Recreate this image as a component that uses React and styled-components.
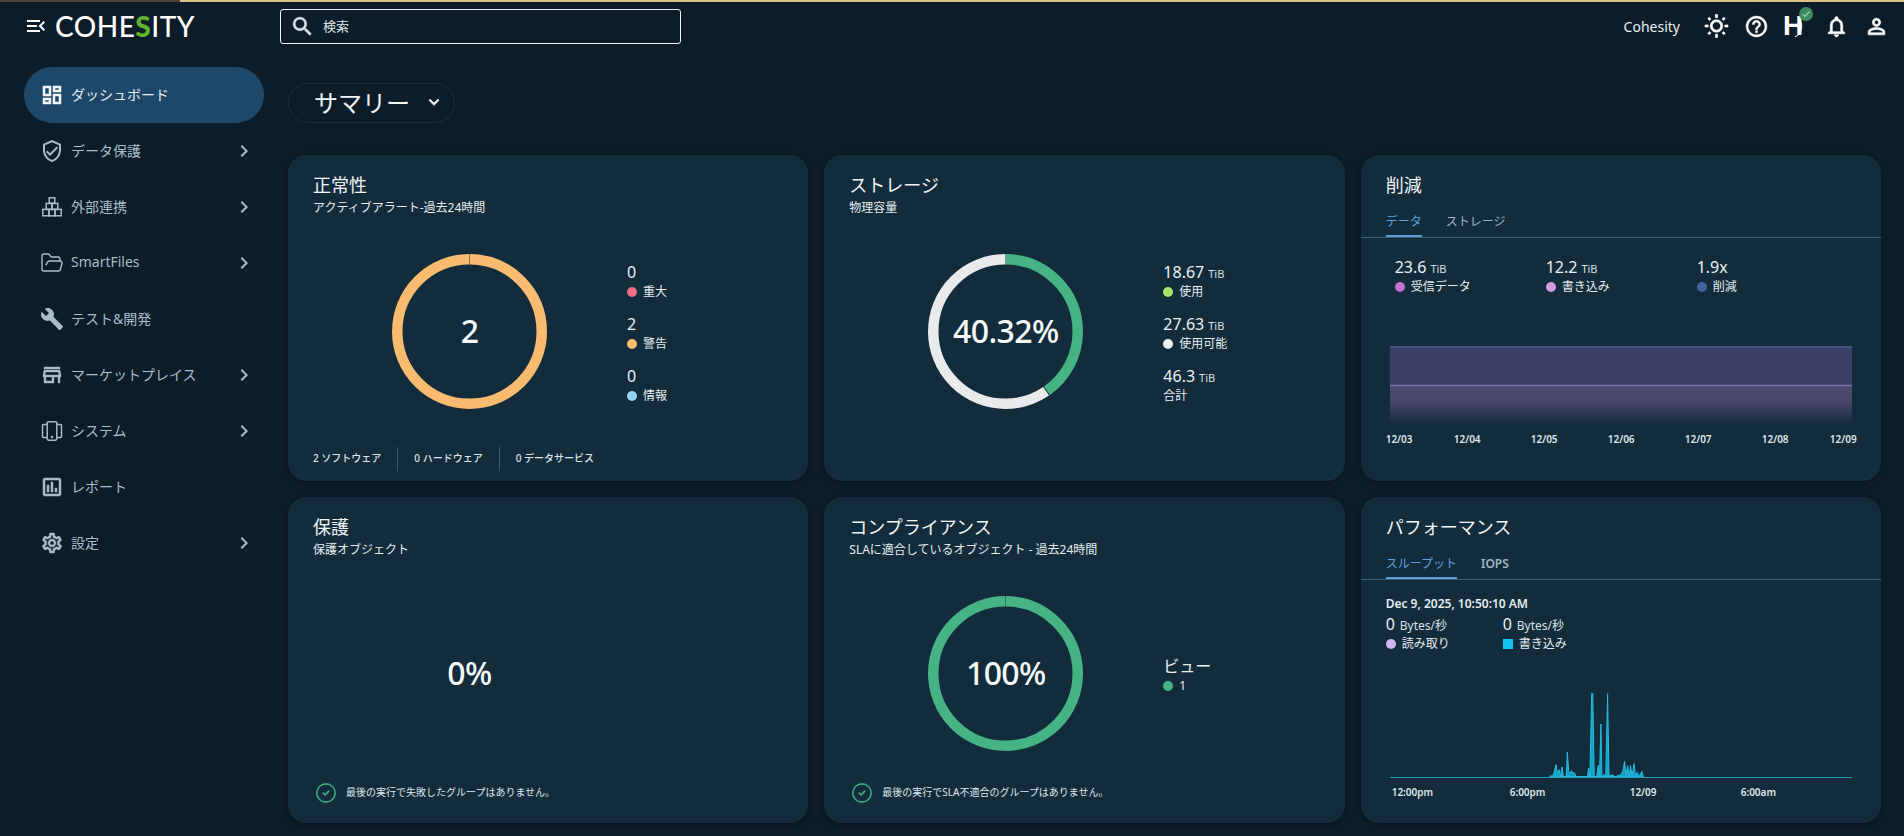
import React from 'react'
import styled, { createGlobalStyle } from 'styled-components'
import {
  MdMenuOpen, MdSearch, MdOutlineWbSunny, MdHelpOutline, MdOutlineNotifications, MdPersonOutline,
  MdOutlineDashboard, MdOutlineVerifiedUser, MdBuild, MdOutlineStore,
  MdOutlineAssessment, MdOutlineSettings, MdChevronRight, MdKeyboardArrowDown, MdCheck
} from 'react-icons/md'
import { LuCircleCheck, LuFolderOpen } from 'react-icons/lu'

const CARD = '#122c3c'
const PAGE = '#0c1c28'

const Global = createGlobalStyle`
  html, body { margin: 0; padding: 0; background: ${PAGE}; }
  body {
    font-family: "Noto Sans", "Noto Sans CJK JP", sans-serif;
    color: #eef3f6;
  }
  * { box-sizing: border-box; }
  /* material icons carry an invisible 24x24 box path, keep it unstroked */
  svg path[fill="none"] { stroke: none; }
`

const Page = styled.div`
  width: 1904px;
  height: 836px;
  overflow: hidden;
  background: ${PAGE};
`

const LoadBar = styled.div`
  height: 2px;
  background: linear-gradient(to right, #4f4636 180px, #dcc088 180px);
`

const Header = styled.header`
  height: 48px;
  display: flex;
  align-items: center;
`

const Brand = styled.div`
  width: 280px;
  padding-left: 24px;
  display: flex;
  align-items: center;
  color: #fff;
`

const LogoText = styled.div`
  margin-left: 7px;
  font-family: "Lato", sans-serif;
  font-size: 28px;
  line-height: 30px;
  font-weight: 500;
  letter-spacing: 0.5px;
  color: #fff;
  span { color: #63b32e; font-weight: 900; }
`

const SearchBox = styled.div`
  width: 401px;
  height: 35px;
  border: 1px solid #f2f5f7;
  border-radius: 3px;
  display: flex;
  align-items: center;
  padding: 0 0 0 9px;
  gap: 8px;
  font-size: 13px;
  color: #dfe7ec;
`

const SearchText = styled.span`
  padding-bottom: 2px;
`

const HeaderRight = styled.div`
  margin-left: auto;
  padding-right: 8px;
  display: flex;
  align-items: center;
`

const TenantName = styled.div`
  font-size: 14px;
  margin-right: 16px;
  color: #e8eef2;
`

const IconSlot = styled.div`
  position: relative;
  width: 40px;
  height: 32px;
  display: flex;
  align-items: center;
  justify-content: center;
  color: #fff;
`

const HeliosMark = styled.span`
  font-family: "Liberation Sans", sans-serif;
  font-weight: 700;
  font-size: 28px;
  line-height: 32px;
  margin-left: -6px;
  color: #fff;
`

const HeliosArc = styled.svg`
  position: absolute;
  left: 15px;
  top: 6px;
`

const Badge = styled.span`
  position: absolute;
  left: 23px;
  top: -3px;
  width: 14px;
  height: 14px;
  border-radius: 50%;
  background: #3f8a5f;
  display: flex;
  align-items: center;
  justify-content: center;
  color: #c5e6d0;
`

const Body = styled.div`
  display: flex;
`

const Sidebar = styled.nav`
  width: 288px;
  flex: none;
  padding: 17px 0 0 24px;
`

const NavItem = styled.div`
  width: 240px;
  height: 56px;
  border-radius: 28px;
  padding: 0 8px 0 16px;
  display: flex;
  align-items: center;
  gap: 7px;
  font-size: 14px;
  background: ${p => (p.$active ? '#1e4869' : 'transparent')};
  color: ${p => (p.$active ? '#e4edf3' : '#a8bdca')};
  svg { color: ${p => (p.$active ? '#f4f8fa' : '#a8bdca')}; flex: none; }
`

const NavLabel = styled.span`
  flex: 1;
  padding-bottom: 3px;
`

const Main = styled.main`
  flex: 1;
  padding: 33px 23px 0 0;
`

const ViewPicker = styled.div`
  width: 167px;
  height: 40px;
  border: 1px solid #1d2f3c;
  border-radius: 20px;
  display: flex;
  align-items: center;
  padding: 0 0 3px 25px;
  gap: 14px;
  font-size: 24px;
  color: #f0f4f7;
  margin-bottom: 32px;
`

const Grid = styled.div`
  display: grid;
  grid-template-columns: repeat(3, 1fr);
  grid-auto-rows: 326px;
  gap: 16px;
`

const Card = styled.section`
  background: ${CARD};
  border-radius: 18px;
  box-shadow: 0 1px 4px rgba(0, 0, 0, 0.35);
  display: flex;
  flex-direction: column;
  overflow: hidden;
  padding-top: 18px;
`

const Title = styled.h2`
  margin: 0;
  padding: 0 25px;
  font-size: 18px;
  line-height: 24px;
  font-weight: 400;
  color: #f2f6f8;
`

const Subtitle = styled.div`
  padding: 1px 25px 0;
  font-size: 12px;
  line-height: 20px;
  color: #e6edf1;
`

const ChartBody = styled.div`
  margin-top: 36px;
  height: 155px;
  display: flex;
`

const DonutBox = styled.div`
  position: relative;
  width: 313px;
  margin-left: 25px;
  margin-right: 1px;
  display: flex;
  justify-content: center;
`

const DonutValue = styled.div`
  position: absolute;
  inset: 0;
  display: flex;
  align-items: center;
  justify-content: center;
  padding-bottom: 3px;
  font-size: 32px;
  font-weight: 500;
  letter-spacing: -0.6px;
  color: #f7fafb;
`

const Legend = styled.div`
  padding-top: 3px;
  display: flex;
  flex-direction: column;
  justify-content: center;
  gap: 12px;
`

const Value = styled.div`
  font-size: 16px;
  line-height: 22px;
  color: #eaf0f4;
  small { font-size: 11px; line-height: 1; margin-left: 4px; color: #d7e0e6; }
`

const Label = styled.div`
  display: flex;
  align-items: center;
  gap: 6px;
  font-size: 12px;
  line-height: 18px;
  color: #e6edf1;
`

const Dot = styled.i`
  width: 10px;
  height: 10px;
  flex: none;
  border-radius: ${p => (p.$square ? '0' : '50%')};
  background: ${p => p.color};
`

const FootStats = styled.div`
  margin-top: auto;
  margin-bottom: 10px;
  padding-left: 25px;
  display: flex;
  height: 24px;
  align-items: center;
`

const FootStat = styled.div`
  font-size: 10px;
  font-weight: 500;
  color: #dce5ea;
  padding: 0 16px 3px;
  height: 100%;
  display: flex;
  align-items: center;
  &:first-child { padding-left: 0; }
  & + & { border-left: 1px solid #3d5666; }
`

const StatusLine = styled.div`
  margin-top: auto;
  margin-bottom: 19px;
  padding-left: 27px;
  display: flex;
  align-items: center;
  gap: 9px;
  font-size: 10px;
  line-height: 20px;
  color: #dfe7ec;
  svg { color: #3fa67f; }
`

const StatusText = styled.span`
  padding-bottom: 2px;
`

const TabBar = styled.div`
  margin-top: 9px;
  padding-left: 25px;
  height: 32px;
  border-bottom: 1px solid #3f6177;
  display: flex;
  gap: 24px;
`

const Tab = styled.div`
  height: 31px;
  padding-top: 3px;
  line-height: 26px;
  font-size: 12px;
  font-weight: ${p => (p.$latin ? 600 : 400)};
  border-bottom: 2px solid ${p => (p.$active ? '#5b9fd6' : 'transparent')};
  color: ${p => (p.$active ? '#5ea3da' : '#9fb6c5')};
`

const Stats = styled.div`
  margin-top: 18px;
  padding-left: 34px;
  display: flex;
`

const StatCol = styled.div`
  width: 151px;
`

const AreaChart = styled.svg`
  display: block;
  margin: 50px 0 0 29px;
`

const DayAxis = styled.div`
  margin: 7px 0 0 25px;
  width: 471px;
  display: grid;
  grid-template-columns: 43px repeat(5, 77px) 43px;
  font-size: 10px;
  line-height: 16px;
  font-weight: 600;
  color: #dfe7ec;
  span { text-align: center; }
  span:first-child { text-align: left; }
  span:last-child { text-align: right; }
`

const Timestamp = styled.div`
  margin-top: 15px;
  padding-left: 25px;
  font-size: 12px;
  line-height: 18px;
  font-weight: 600;
  color: #e6edf1;
`

const PerfStats = styled.div`
  margin-top: 1px;
  padding-left: 25px;
  display: flex;
`

const PerfCol = styled.div`
  width: 117px;
`

const PerfValue = styled(Value)`
  line-height: 21px;
  small { font-size: 12px; margin-left: 5px; }
`

const SpikeChart = styled.svg`
  display: block;
  margin: 37px 0 0 29px;
`

const TimeAxis = styled.div`
  margin: 2px 0 0 31px;
  display: grid;
  grid-template-columns: 118px 120px 111px auto;
  font-size: 10px;
  line-height: 16px;
  font-weight: 600;
  color: #dfe7ec;
`

// 外部連携 stacked boxes, not in the icon set
const StackIcon = () => (
  <svg width='24' height='24' viewBox='0 0 24 24' fill='none' stroke='currentColor' strokeWidth='1.5'>
    <rect x='9.2' y='2.8' width='5.6' height='5.6' />
    <rect x='6.2' y='8.4' width='5.8' height='6' />
    <rect x='12' y='8.4' width='5.8' height='6' />
    <rect x='2.8' y='14.4' width='6.2' height='6.4' />
    <rect x='9' y='14.4' width='6' height='6.4' />
    <rect x='15' y='14.4' width='6.2' height='6.4' />
  </svg>
)

const DevicesIcon = () => (
  <svg width='24' height='24' viewBox='0 0 24 24' fill='none' stroke='currentColor' strokeWidth='1.5'>
    <rect x='7.2' y='2.8' width='9.6' height='18.4' rx='1.4' />
    <path d='M7.2 5.5H3.4a.9.9 0 0 0-.9.9v11.2a.9.9 0 0 0 .9.9h3.8M16.8 5.5h3.8a.9.9 0 0 1 .9.9v11.2a.9.9 0 0 1-.9.9h-3.8' />
    <circle cx='12' cy='18' r='.5' fill='currentColor' />
  </svg>
)

const Donut = ({ segments }) => {
  const r = 72.25
  const c = 2 * Math.PI * r
  let start = 0
  return (
    <svg width='155' height='155' viewBox='0 0 155 155'>
      <g transform='rotate(-90 77.5 77.5)' fill='none' strokeWidth='10.5'>
        {segments.map(s => {
          const len = c * s.share
          const el = (
            <circle
              key={s.color}
              cx='77.5'
              cy='77.5'
              r={r}
              stroke={s.color}
              strokeDasharray={`${len - 1} ${c - len + 1}`}
              strokeDashoffset={-start - 0.5}
            />
          )
          start += len
          return el
        })}
      </g>
    </svg>
  )
}

const nav = [
  { label: 'ダッシュボード', icon: <MdOutlineDashboard size={24} strokeWidth={0.5} />, active: true },
  { label: 'データ保護', icon: <MdOutlineVerifiedUser size={24} />, more: true },
  { label: '外部連携', icon: <StackIcon />, more: true },
  { label: 'SmartFiles', icon: <LuFolderOpen size={24} strokeWidth={1.4} />, more: true },
  { label: 'テスト&開発', icon: <MdBuild size={24} /> },
  { label: 'マーケットプレイス', icon: <MdOutlineStore size={24} strokeWidth={0.4} />, more: true },
  { label: 'システム', icon: <DevicesIcon />, more: true },
  { label: 'レポート', icon: <MdOutlineAssessment size={24} strokeWidth={0.5} /> },
  { label: '設定', icon: <MdOutlineSettings size={24} strokeWidth={0.5} />, more: true }
]

// zoomed reference coordinates of the throughput spikes: x along the card, y above the base line
const spikes = [
  [565, 860], [575, 858], [583, 825], [587, 850], [592, 840], [596, 860], [600, 832], [604, 860], [612, 862],
  [615, 787], [619, 845], [623, 850], [627, 843], [631, 852], [635, 848], [640, 862], [672, 862], [675, 835],
  [679, 860], [684, 610], [687, 612], [691, 862], [698, 862], [703, 827], [706, 860], [710, 703], [713, 860],
  [720, 855], [724, 860], [729, 612], [733, 860], [743, 855], [750, 862], [757, 858], [767, 855], [772, 845],
  [777, 815], [781, 855], [786, 828], [790, 860], [794, 828], [798, 860], [804, 822], [808, 860], [813, 848],
  [818, 862], [826, 845], [830, 862]
]
const spikePoints = spikes
  .map(([x, y]) => `${(x / 2.83 - 40).toFixed(1)},${(87 + (y - 862) / 3).toFixed(1)}`)
  .join(' ')

const App = () => (
  <Page>
    <Global />
    <LoadBar />
    <Header>
      <Brand>
        <MdMenuOpen size={24} />
        <LogoText>COHE<span>S</span>ITY</LogoText>
      </Brand>
      <SearchBox>
        <MdSearch size={25} strokeWidth={0.5} />
        <SearchText>検索</SearchText>
      </SearchBox>
      <HeaderRight>
        <TenantName>Cohesity</TenantName>
        <IconSlot><MdOutlineWbSunny size={25} strokeWidth={0.6} /></IconSlot>
        <IconSlot><MdHelpOutline size={25} strokeWidth={0.4} /></IconSlot>
        <IconSlot>
          <HeliosMark>H</HeliosMark>
          <HeliosArc width='14' height='24' viewBox='0 0 14 24' fill='none' stroke='#fff' strokeWidth='1'>
            <path d='M9 4c3 5 2 11-2 15l-3 2' />
          </HeliosArc>
          <Badge><MdCheck size={10} /></Badge>
        </IconSlot>
        <IconSlot><MdOutlineNotifications size={25} strokeWidth={0.6} /></IconSlot>
        <IconSlot><MdPersonOutline size={25} strokeWidth={0.6} /></IconSlot>
      </HeaderRight>
    </Header>
    <Body>
      <Sidebar>
        {nav.map(item => (
          <NavItem key={item.label} $active={item.active}>
            {item.icon}
            <NavLabel>{item.label}</NavLabel>
            {item.more && <MdChevronRight size={24} />}
          </NavItem>
        ))}
      </Sidebar>
      <Main>
        <ViewPicker>
          サマリー
          <MdKeyboardArrowDown size={20} strokeWidth={1} />
        </ViewPicker>
        <Grid>
          <Card>
            <Title>正常性</Title>
            <Subtitle>アクティブアラート-過去24時間</Subtitle>
            <ChartBody>
              <DonutBox>
                <Donut segments={[{ share: 1, color: '#f9bb6f' }]} />
                <DonutValue>2</DonutValue>
              </DonutBox>
              <Legend>
                <div><Value>0</Value><Label><Dot color='#ef6f82' />重大</Label></div>
                <div><Value>2</Value><Label><Dot color='#f9bb6f' />警告</Label></div>
                <div><Value>0</Value><Label><Dot color='#93d4f7' />情報</Label></div>
              </Legend>
            </ChartBody>
            <FootStats>
              <FootStat>2 ソフトウェア</FootStat>
              <FootStat>0 ハードウェア</FootStat>
              <FootStat>0 データサービス</FootStat>
            </FootStats>
          </Card>

          <Card>
            <Title>ストレージ</Title>
            <Subtitle>物理容量</Subtitle>
            <ChartBody>
              <DonutBox>
                <Donut segments={[{ share: 0.4032, color: '#45b384' }, { share: 0.5968, color: '#e9eaeb' }]} />
                <DonutValue>40.32%</DonutValue>
              </DonutBox>
              <Legend>
                <div><Value>18.67<small>TiB</small></Value><Label><Dot color='#a6e070' />使用</Label></div>
                <div><Value>27.63<small>TiB</small></Value><Label><Dot color='#ecedee' />使用可能</Label></div>
                <div><Value>46.3<small>TiB</small></Value><Label>合計</Label></div>
              </Legend>
            </ChartBody>
          </Card>

          <Card>
            <Title>削減</Title>
            <TabBar>
              <Tab $active>データ</Tab>
              <Tab>ストレージ</Tab>
            </TabBar>
            <Stats>
              <StatCol><Value>23.6<small>TiB</small></Value><Label><Dot color='#c46fd0' />受信データ</Label></StatCol>
              <StatCol><Value>12.2<small>TiB</small></Value><Label><Dot color='#d29ae0' />書き込み</Label></StatCol>
              <StatCol><Value>1.9x</Value><Label><Dot color='#44659c' />削減</Label></StatCol>
            </Stats>
            <AreaChart width='462' height='78' viewBox='0 0 462 78'>
              <defs>
                <linearGradient id='lower' x1='0' y1='0' x2='0' y2='1'>
                  <stop offset='0' stopColor='#4d4a70' />
                  <stop offset='0.45' stopColor='#47456a' />
                  <stop offset='1' stopColor={CARD} />
                </linearGradient>
              </defs>
              <rect x='0' y='0' width='462' height='39' fill='#3a4068' />
              <rect x='0' y='39' width='462' height='39' fill='url(#lower)' />
              <line x1='0' y1='1' x2='462' y2='1' stroke='#4d5985' strokeWidth='1.5' />
              <line x1='0' y1='39.5' x2='462' y2='39.5' stroke='#7f6fa2' strokeWidth='1.5' />
            </AreaChart>
            <DayAxis>
              {['12/03', '12/04', '12/05', '12/06', '12/07', '12/08', '12/09'].map(d => <span key={d}>{d}</span>)}
            </DayAxis>
          </Card>

          <Card>
            <Title>保護</Title>
            <Subtitle>保護オブジェクト</Subtitle>
            <ChartBody>
              <DonutBox>
                <DonutValue>0%</DonutValue>
              </DonutBox>
            </ChartBody>
            <StatusLine>
              <LuCircleCheck size={22} strokeWidth={1.8} />
              <StatusText>最後の実行で失敗したグループはありません。</StatusText>
            </StatusLine>
          </Card>

          <Card>
            <Title>コンプライアンス</Title>
            <Subtitle>SLAに適合しているオブジェクト - 過去24時間</Subtitle>
            <ChartBody>
              <DonutBox>
                <Donut segments={[{ share: 1, color: '#45b384' }]} />
                <DonutValue>100%</DonutValue>
              </DonutBox>
              <Legend>
                <div><Value>ビュー</Value><Label><Dot color='#45b384' />1</Label></div>
              </Legend>
            </ChartBody>
            <StatusLine>
              <LuCircleCheck size={22} strokeWidth={1.8} />
              <StatusText>最後の実行でSLA不適合のグループはありません。</StatusText>
            </StatusLine>
          </Card>

          <Card>
            <Title>パフォーマンス</Title>
            <TabBar>
              <Tab $active>スループット</Tab>
              <Tab $latin>IOPS</Tab>
            </TabBar>
            <Timestamp>Dec 9, 2025, 10:50:10 AM</Timestamp>
            <PerfStats>
              <PerfCol><PerfValue>0<small>Bytes/秒</small></PerfValue><Label><Dot color='#cdb8f5' />読み取り</Label></PerfCol>
              <PerfCol><PerfValue>0<small>Bytes/秒</small></PerfValue><Label><Dot color='#12c5f0' $square />書き込み</Label></PerfCol>
            </PerfStats>
            <SpikeChart width='462' height='92' viewBox='0 0 462 92'>
              <polygon points={spikePoints} fill='#12c0e8' fillOpacity='0.8' stroke='#25bcde' strokeWidth='1' />
              <line x1='0' y1='87.5' x2='462' y2='87.5' stroke='#2a9cbd' strokeWidth='1' />
            </SpikeChart>
            <TimeAxis>
              <span>12:00pm</span>
              <span>6:00pm</span>
              <span>12/09</span>
              <span>6:00am</span>
            </TimeAxis>
          </Card>
        </Grid>
      </Main>
    </Body>
  </Page>
)

export default App
